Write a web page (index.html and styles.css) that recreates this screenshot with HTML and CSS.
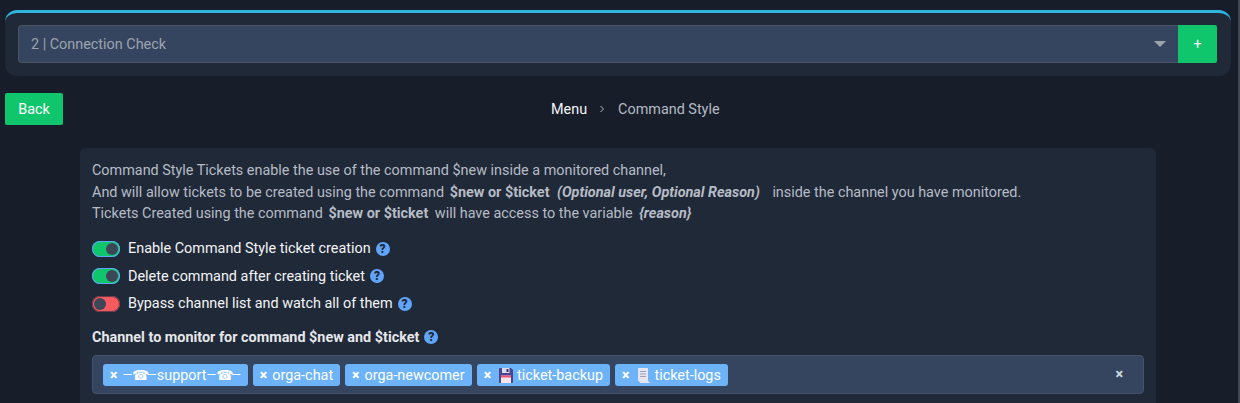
FILE: index.html
```html
<!DOCTYPE html>
<html lang="en">
<head>
<meta charset="utf-8">
<title>Command Style</title>
<link rel="stylesheet" href="styles.css">
</head>
<body>
<div class="page">
  <section class="top-panel">
    <div class="select-row">
      <div class="select">
        <span class="select-value">2 | Connection Check</span>
        <svg class="caret" width="12" height="6" viewBox="0 0 12 6"><path d="M0 0h12L6 6z" fill="#9ca3af"/></svg>
      </div>
      <button class="add-btn">+</button>
    </div>
  </section>

  <div class="nav-row">
    <button class="back-btn">Back</button>
    <nav class="crumbs">
      <span class="crumb-main">Menu</span>
      <svg class="crumb-sep" width="6" height="8" viewBox="0 0 6 8"><path d="M1.5 1l3 3-3 3" fill="none" stroke="#b4bac4" stroke-width="1"/></svg>
      <span class="crumb-current">Command Style</span>
    </nav>
  </div>

  <section class="card">
    <p class="intro">Command Style Tickets enable the use of the command $new inside a monitored channel,</p>
    <p class="intro">And will allow tickets to be created using the command <b class="em">$new or $ticket</b> <b class="em2 near"><i>(Optional user, Optional Reason)</i></b> <span class="after">inside the channel you have monitored.</span></p>
    <p class="intro">Tickets Created using the command <b class="em">$new or $ticket</b> <span>will have access to the variable</span> <b class="em2"><i>{reason}</i></b></p>

    <div class="toggles">
      <div class="toggle-row">
        <span class="toggle on"><span class="knob"></span></span>
        <span class="toggle-label">Enable Command Style ticket creation</span>
        <span class="help">?</span>
      </div>
      <div class="toggle-row">
        <span class="toggle on"><span class="knob"></span></span>
        <span class="toggle-label">Delete command after creating ticket</span>
        <span class="help">?</span>
      </div>
      <div class="toggle-row">
        <span class="toggle off"><span class="knob"></span></span>
        <span class="toggle-label">Bypass channel list and watch all of them</span>
        <span class="help">?</span>
      </div>
    </div>

    <div class="field-label">Channel to monitor for command $new and $ticket<span class="help">?</span></div>
    <div class="multi">
      <span class="tag"><span class="x">×</span><span class="tag-text"><span class="dash">—</span><span class="phone">☎</span><span class="dash">—</span>support<span class="dash">—</span><span class="phone">☎</span><span class="dash">—</span></span></span>
      <span class="tag"><span class="x">×</span><span class="tag-text">orga-chat</span></span>
      <span class="tag"><span class="x">×</span><span class="tag-text">orga-newcomer</span></span>
      <span class="tag"><span class="x">×</span>
        <svg class="emoji" width="14" height="15" viewBox="0 0 14 15"><path d="M0 1a1 1 0 0 1 1-1h11l2 2v12a1 1 0 0 1-1 1H1a1 1 0 0 1-1-1z" fill="#4a4590"/><path d="M3 0h7.500v5H3z" fill="#d9dbe8"/><path d="M7.500 1h2v3h-2z" fill="#37366f"/><path d="M2 7.500h10V15H2z" fill="#f6e6ea"/><path d="M2 7.500h10V9.500H2z" fill="#e8566f"/></svg>
        <span class="tag-text">ticket-backup</span></span>
      <span class="tag"><span class="x">×</span>
        <svg class="emoji" width="13" height="15" viewBox="0 0 13 15"><path d="M1 0h10v12.500l2 2.500H3.500L1 12.500z" fill="#e6e4f0"/><path d="M3 3h6v1H3zM3 5.500h6v1H3zM3 8h6v1H3z" fill="#a09eb6"/></svg>
        <span class="tag-text">ticket-logs</span></span>
      <span class="clear">×</span>
    </div>
  </section>
</div>
</body>
</html>
```

FILE: styles.css
```css
* { box-sizing: border-box; }
html, body { margin: 0; height: 100%; overflow: hidden; }
body {
  background: #171e2a;
  font-family: Roboto, "Liberation Sans", sans-serif;
  font-size: 14.4px;
  color: #f3f4f6;
}
body::after {
  content: "";
  position: fixed;
  top: 0;
  right: 0;
  bottom: 0;
  width: 2px;
  background: #434852;
}
.page { padding: 10px 9px 0 5px; }

.top-panel {
  background: #202938;
  border-top: 3px solid #2fb4e0;
  border-radius: 12px;
  padding: 12px 14px 13px 13px;
  height: 66px;
}
.select-row { display: flex; height: 38px; }
.select {
  flex: 1;
  display: flex;
  align-items: center;
  justify-content: space-between;
  background: #36455f;
  border: 1px solid #4b5563;
  border-right: 0;
  border-radius: 4px 0 0 4px;
  padding: 0 12px;
}
.select-value { color: #9ca3af; }
.add-btn {
  width: 39px;
  border: 0;
  border-radius: 0 2px 2px 0;
  background: #10c66c;
  color: #fff;
  font: 14.4px Roboto, sans-serif;
  padding: 0;
}

.nav-row { display: flex; align-items: center; margin-top: 17px; height: 32px; }
.back-btn {
  width: 58px;
  height: 32px;
  border: 0;
  border-radius: 2px;
  background: #10c66c;
  color: #fff;
  font: 14.4px Roboto, sans-serif;
  padding: 0;
}
.crumbs { display: flex; align-items: center; margin-left: 488px; }
.crumb-main { color: #f3f4f6; }
.crumb-sep { margin: 0 13px 0 12px; }
.crumb-current { color: #b4bac4; }

.card {
  margin: 23px 0 0 75px;
  width: 1076px;
  height: 300px;
  background: #202938;
  border-radius: 6px;
  padding: 12px;
}
.intro { margin: 0; line-height: 21.6px; color: #b6bcc6; }
.em { margin: 0 3px 0 2px; }
.em2 { margin-left: 3px; }
.em2.near { margin-left: 1px; }
.after { margin-left: 9px; }

.toggles { margin-top: 10px; }
.toggle-row { display: flex; align-items: center; height: 27.500px; }
.toggle {
  width: 28px;
  height: 16px;
  border-radius: 8px;
  display: flex;
  align-items: center;
  padding: 0 2px;
  margin-right: 8px;
}
.toggle.on { background: #10c66c; justify-content: flex-end; box-shadow: inset 0 0 0 1px #60a5fa; }
.toggle.off { background: #f95a5f; justify-content: flex-start; box-shadow: inset 0 0 0 1px #6b3a4a; }
.knob { width: 12px; height: 12px; border-radius: 50%; background: #3e4758; }
.toggle-label { color: #f3f4f6; }
.help {
  display: inline-block;
  width: 14px;
  height: 14px;
  border-radius: 50%;
  background: #60a5fa;
  color: #1f2937;
  font-size: 12px;
  font-weight: 900;
  line-height: 14px;
  text-align: center;
  margin-left: 5px;
  vertical-align: 1px;
}
.field-label { margin-top: 11px; font-weight: 700; color: #e5e7eb; line-height: 20px; }

.multi {
  margin-top: 7px;
  height: 39px;
  background: #36455f;
  border: 1px solid #455268;
  border-radius: 4px;
  display: flex;
  align-items: center;
  gap: 5px;
  padding: 1px 10px 0;
}
.tag {
  display: flex;
  align-items: center;
  height: 22px;
  padding: 0 7px;
  background: #6cb3fa;
  border-radius: 3px;
  color: #fff;
  white-space: nowrap;
}
.x { font-size: 14px; font-weight: 900; margin-right: 5px; }
.dash { font-size: 12.4px; vertical-align: 1px; }
.phone { display: inline-block; width: 15px; text-align: center; font-family: "DejaVu Sans", sans-serif; font-size: 14px; line-height: 1; }
.emoji { margin: 0 4px 0 3px; }
.clear { margin: 0 10px 1px auto; color: #cbd5e1; font-weight: 900; }
```
